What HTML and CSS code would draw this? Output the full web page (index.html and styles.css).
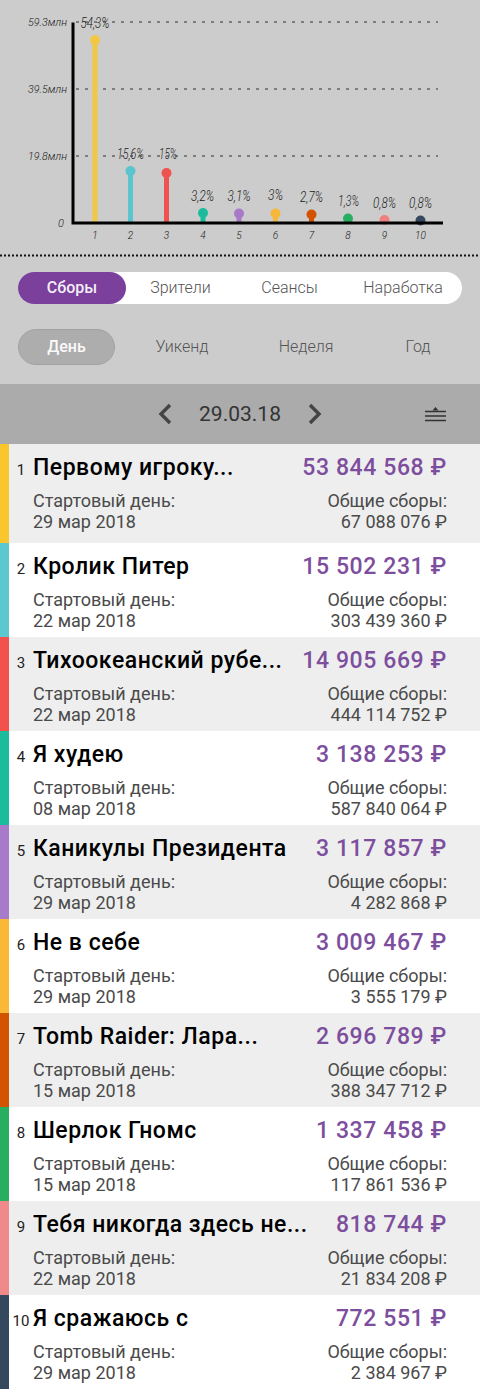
FILE: index.html
```html
<!DOCTYPE html>
<html lang="ru">
<head>
    <meta charset="UTF-8">
    <meta name="viewport" content="width=device-width, initial-scale=1.0">
    <title>Кассовые сборы</title>
    <link rel="stylesheet" href="styles.css">
</head>
<body>
    <div class="top">
        <svg class="chart" width="480" height="258" viewBox="0 0 480 258">
            <!-- horizontal guides -->
            <g class="guides">
                <line x1="76" y1="22" x2="438" y2="22"/>
                <line x1="76" y1="89" x2="438" y2="89"/>
                <line x1="76" y1="156" x2="438" y2="156"/>
            </g>
            <g class="ylabels">
                <text x="67" y="26" textLength="39" lengthAdjust="spacingAndGlyphs">59.3млн</text>
                <text x="67" y="93" textLength="39" lengthAdjust="spacingAndGlyphs">39.5млн</text>
                <text x="67" y="160" textLength="39" lengthAdjust="spacingAndGlyphs">19.8млн</text>
                <text x="64" y="227">0</text>
            </g>
            <!-- one stem per film -->
            <g class="stems">
                <g style="color:#f2c744"><line x1="95" y1="40" x2="95" y2="223"/><circle cx="95" cy="40" r="5"/></g>
                <g style="color:#5bc4cf"><line x1="130.5" y1="171" x2="130.5" y2="223"/><circle cx="130.5" cy="171" r="5"/></g>
                <g style="color:#ef5350"><line x1="166.5" y1="173" x2="166.5" y2="223"/><circle cx="166.5" cy="173" r="5"/></g>
                <g style="color:#1abc9c"><line x1="203" y1="213" x2="203" y2="223"/><circle cx="203" cy="213" r="5"/></g>
                <g style="color:#a879c9"><line x1="239" y1="213.5" x2="239" y2="223"/><circle cx="239" cy="213.5" r="5"/></g>
                <g style="color:#f7b73a"><line x1="275.5" y1="213.5" x2="275.5" y2="223"/><circle cx="275.5" cy="213.5" r="5"/></g>
                <g style="color:#d35400"><line x1="311.5" y1="214.5" x2="311.5" y2="223"/><circle cx="311.5" cy="214.5" r="5"/></g>
                <g style="color:#27ae60"><circle cx="348" cy="218.5" r="5"/></g>
                <g style="color:#f08080"><circle cx="384.5" cy="220" r="5"/></g>
                <g style="color:#34495e"><circle cx="420.5" cy="220.5" r="5"/></g>
            </g>
            <path class="axis" d="M73 22.5 V224.5 M71.5 223 H443"/>
            <g class="shares">
                <text x="95" y="28" textLength="29" lengthAdjust="spacingAndGlyphs">54,3%</text>
                <text x="130.5" y="159" textLength="27" lengthAdjust="spacingAndGlyphs">15,6%</text>
                <text x="168" y="159" textLength="18" lengthAdjust="spacingAndGlyphs">15%</text>
                <text x="202.5" y="201" textLength="23" lengthAdjust="spacingAndGlyphs">3,2%</text>
                <text x="239" y="201" textLength="23" lengthAdjust="spacingAndGlyphs">3,1%</text>
                <text x="275.5" y="200" textLength="15" lengthAdjust="spacingAndGlyphs">3%</text>
                <text x="311.5" y="202" textLength="23" lengthAdjust="spacingAndGlyphs">2,7%</text>
                <text x="348.5" y="206" textLength="21" lengthAdjust="spacingAndGlyphs">1,3%</text>
                <text x="384.5" y="208" textLength="23" lengthAdjust="spacingAndGlyphs">0,8%</text>
                <text x="420.5" y="208" textLength="23" lengthAdjust="spacingAndGlyphs">0,8%</text>
            </g>
            <g class="xlabels">
                <text x="95" y="239">1</text>
                <text x="130.5" y="239">2</text>
                <text x="166.5" y="239">3</text>
                <text x="203" y="239">4</text>
                <text x="239" y="239">5</text>
                <text x="275.5" y="239">6</text>
                <text x="311.5" y="239">7</text>
                <text x="348" y="239">8</text>
                <text x="384.5" y="239">9</text>
                <text x="420.5" y="239">10</text>
            </g>
            <line class="divider" x1="0" y1="255.5" x2="480" y2="255.5"/>
        </svg>

        <nav class="tabs">
            <span class="tab active">Сборы</span>
            <span class="tab">Зрители</span>
            <span class="tab">Сеансы</span>
            <span class="tab">Наработка</span>
        </nav>

        <nav class="periods">
            <span class="period active">День</span>
            <span class="period">Уикенд</span>
            <span class="period">Неделя</span>
            <span class="period">Год</span>
        </nav>
    </div>

    <div class="datebar">
        <div class="datenav">
            <svg class="chevron" width="14" height="22" viewBox="0 0 14 22"><path d="M12 2 L3 11 L12 20"/></svg>
            <span class="date">29.03.18</span>
            <svg class="chevron" width="14" height="22" viewBox="0 0 14 22"><path d="M2 2 L11 11 L2 20"/></svg>
        </div>
        <svg class="sort" width="21" height="16" viewBox="0 0 21 16">
            <path class="sort-tip" d="M7.5 4.5 L10.5 1 L13.5 4.5 Z"/>
            <path class="sort-lines" d="M0 5.5 H21 M0 10 H21 M0 14.5 H21"/>
        </svg>
    </div>

    <ul class="films">
        <li class="film">
            <div class="film-head"><span class="rank">1</span><span class="title">Первому игроку...</span><span class="gross">53 844 568 ₽</span></div>
            <div class="film-info"><div>Стартовый день:<br>29 мар 2018</div><div class="total">Общие сборы:<br>67 088 076 ₽</div></div>
        </li>
        <li class="film">
            <div class="film-head"><span class="rank">2</span><span class="title">Кролик Питер</span><span class="gross">15 502 231 ₽</span></div>
            <div class="film-info"><div>Стартовый день:<br>22 мар 2018</div><div class="total">Общие сборы:<br>303 439 360 ₽</div></div>
        </li>
        <li class="film">
            <div class="film-head"><span class="rank">3</span><span class="title">Тихоокеанский рубе...</span><span class="gross">14 905 669 ₽</span></div>
            <div class="film-info"><div>Стартовый день:<br>22 мар 2018</div><div class="total">Общие сборы:<br>444 114 752 ₽</div></div>
        </li>
        <li class="film">
            <div class="film-head"><span class="rank">4</span><span class="title">Я худею</span><span class="gross">3 138 253 ₽</span></div>
            <div class="film-info"><div>Стартовый день:<br>08 мар 2018</div><div class="total">Общие сборы:<br>587 840 064 ₽</div></div>
        </li>
        <li class="film">
            <div class="film-head"><span class="rank">5</span><span class="title">Каникулы Президента</span><span class="gross">3 117 857 ₽</span></div>
            <div class="film-info"><div>Стартовый день:<br>29 мар 2018</div><div class="total">Общие сборы:<br>4 282 868 ₽</div></div>
        </li>
        <li class="film">
            <div class="film-head"><span class="rank">6</span><span class="title">Не в себе</span><span class="gross">3 009 467 ₽</span></div>
            <div class="film-info"><div>Стартовый день:<br>29 мар 2018</div><div class="total">Общие сборы:<br>3 555 179 ₽</div></div>
        </li>
        <li class="film">
            <div class="film-head"><span class="rank">7</span><span class="title">Tomb Raider: Лара...</span><span class="gross">2 696 789 ₽</span></div>
            <div class="film-info"><div>Стартовый день:<br>15 мар 2018</div><div class="total">Общие сборы:<br>388 347 712 ₽</div></div>
        </li>
        <li class="film">
            <div class="film-head"><span class="rank">8</span><span class="title">Шерлок Гномс</span><span class="gross">1 337 458 ₽</span></div>
            <div class="film-info"><div>Стартовый день:<br>15 мар 2018</div><div class="total">Общие сборы:<br>117 861 536 ₽</div></div>
        </li>
        <li class="film">
            <div class="film-head"><span class="rank">9</span><span class="title">Тебя никогда здесь не...</span><span class="gross">818 744 ₽</span></div>
            <div class="film-info"><div>Стартовый день:<br>22 мар 2018</div><div class="total">Общие сборы:<br>21 834 208 ₽</div></div>
        </li>
        <li class="film">
            <div class="film-head"><span class="rank">10</span><span class="title">Я сражаюсь с</span><span class="gross">772 551 ₽</span></div>
            <div class="film-info"><div>Стартовый день:<br>29 мар 2018</div><div class="total">Общие сборы:<br>2 384 967 ₽</div></div>
        </li>
    </ul>
</body>
</html>
```

FILE: styles.css
```css
body {
    margin: 0;
    font-family: Roboto, "Noto Sans", sans-serif;
    background: #fff;
    color: #111;
}
.top {
    background: #cccccc;
    padding-bottom: 19px;
}
.chart {
    display: block;
}
.guides line {
    stroke: #7d7d7d;
    stroke-width: 2;
    stroke-dasharray: 3 6;
}
.chart text {
    font-family: Roboto, sans-serif;
    font-weight: 300;
    font-style: italic;
    fill: #1a1a1a;
}
.ylabels text {
    font-size: 11px;
    text-anchor: end;
}
.shares text {
    font-size: 14px;
    text-anchor: middle;
}
.xlabels text {
    font-size: 10px;
    text-anchor: middle;
}
.stems line {
    stroke: currentColor;
    stroke-width: 5;
}
.stems circle {
    fill: currentColor;
}
.axis {
    fill: none;
    stroke: #000;
    stroke-width: 3;
}
.divider {
    stroke: #111;
    stroke-width: 2;
    stroke-dasharray: 2 2;
}
.tabs {
    margin: 14px 18px 0;
    height: 32px;
    background: #fff;
    border-radius: 16px;
    display: grid;
    grid-template-columns: 108px 109px 109px 1fr;
    align-items: center;
}
.tab, .period {
    text-align: center;
    font-size: 16px;
    font-weight: 300;
    color: #555;
}
.tab {
    line-height: 32px;
    border-radius: 16px;
}
.tab.active {
    background: #7b3f9c;
    color: #f4eef7;
    font-weight: 500;
}
.periods {
    margin: 25px 0 0 18px;
    display: grid;
    grid-template-columns: 97px 134px 114px 110px;
    align-items: center;
}
.period {
    line-height: 36px;
}
.period.active {
    line-height: 34px;
    background: #adadad;
    border: 1px solid #a2a2a2;
    border-radius: 18px;
    color: #fafafa;
    font-weight: 500;
}
.datebar {
    height: 60px;
    background: #ababab;
    display: grid;
    grid-template-columns: 1fr auto 1fr;
    align-items: center;
}
.datenav {
    grid-column: 2;
    display: flex;
    align-items: center;
    gap: 27px;
}
.chevron path {
    fill: none;
    stroke: #444;
    stroke-width: 3.4;
}
.date {
    font-size: 21px;
    color: #333;
}
.sort {
    justify-self: end;
    margin-right: 34px;
}
.sort-tip {
    fill: #333;
}
.sort-lines {
    stroke: #333;
    stroke-width: 1.4;
}
.films {
    list-style: none;
    margin: 0;
    padding: 0;
}
.film {
    height: 94px;
    box-sizing: border-box;
    padding: 8px 33px 0 0;
    border-left: 9px solid;
    background: #fff;
}
.film:nth-child(odd) {
    background: #eeeeee;
}
.film:first-child {
    height: 99px;
}
.film:nth-child(1) { border-color: #f9c62d; }
.film:nth-child(2) { border-color: #5bc8d0; }
.film:nth-child(3) { border-color: #f2524b; }
.film:nth-child(4) { border-color: #1abc9c; }
.film:nth-child(5) { border-color: #a77bc9; }
.film:nth-child(6) { border-color: #f9b936; }
.film:nth-child(7) { border-color: #d35400; }
.film:nth-child(8) { border-color: #27ae60; }
.film:nth-child(9) { border-color: #f08a8a; }
.film:nth-child(10) { border-color: #34495e; }
.film-head {
    display: flex;
    align-items: baseline;
    line-height: 32px;
}
.rank {
    width: 24px;
    flex: none;
    text-align: center;
    font-size: 15px;
    color: #222;
}
.title {
    flex: 1;
    font-size: 23px;
    font-weight: 500;
    letter-spacing: 0.5px;
    color: #000;
    white-space: nowrap;
}
.gross {
    font-size: 23px;
    font-weight: 500;
    letter-spacing: 0.6px;
    color: #7d4e9e;
    white-space: nowrap;
}
.film-info {
    margin: 4px 0 0 24px;
    display: flex;
    justify-content: space-between;
    font-size: 18px;
    line-height: 21px;
    color: #4a4a4a;
}
.total {
    text-align: right;
}
```
